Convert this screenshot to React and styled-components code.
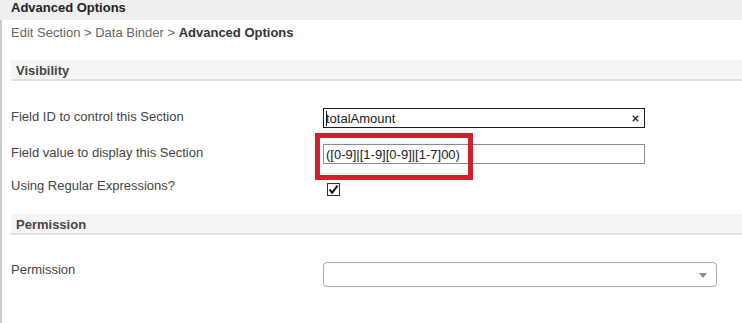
import React from "react";
import styled, { createGlobalStyle } from "styled-components";

const Global = createGlobalStyle`
  html, body { margin: 0; padding: 0; background: #fff; }
  body { font-family: "Liberation Sans", Arial, sans-serif; font-size: 13px; color: #333; }
  * { box-sizing: border-box; }
`;

const TitleBar = styled.div`
  height: 20px;
  background: #efefef;
  padding-left: 11px;
  font-weight: bold;
  line-height: 16px;
  color: #222;
`;

const Body = styled.div`
  border-left: 2px solid #c9c9c9;
  padding-left: 9px;
  min-height: 303px;
  display: flex;
  flex-direction: column;
`;

const Breadcrumb = styled.div`
  margin-top: 5px;
  line-height: 16px;
  color: #666;
  b { color: #333; }
`;

const SectionHeader = styled.div`
  margin-top: ${p => p.$top}px;
  height: 21px;
  background: #f5f5f5;
  border-bottom: 2px solid #e0e0e0;
  padding: 3px 0 0 5px;
  line-height: 16px;
  font-weight: bold;
  color: #444;
`;

const Row = styled.div`
  display: flex;
  align-items: flex-start;
  margin-top: ${p => p.$top}px;
  min-height: ${p => p.$h || 20}px;
`;

const Label = styled.div`
  width: 312px;
  flex: none;
  line-height: 16px;
  padding-top: ${p => p.$pt || 0}px;
  color: #444;
`;

const Cell = styled.div`
  position: relative;
  display: flex;
  align-items: center;
`;

const TextInput = styled.input`
  width: 322px;
  height: 20px;
  border: 1px solid ${p => p.$dark ? "#1a1a1a" : "#8a8a8a"};
  padding: 0 0 0 2px;
  margin: 0;
  font-family: "Liberation Sans", Arial, sans-serif;
  font-size: 13px;
  color: #222;
  background: #fff;
  outline: none;
`;

const Caret = styled.span`
  position: absolute;
  left: 3px;
  top: 3px;
  width: 1px;
  height: 15px;
  background: #111;
`;

const Clear = styled.span`
  position: absolute;
  right: 6px;
  top: 7px;
  width: 7px;
  height: 7px;
  display: flex;
`;

const Annotation = styled.div`
  position: absolute;
  left: -8px;
  top: -11px;
  width: 158px;
  height: 47px;
  border: 5px solid #d31f2d;
  pointer-events: none;
`;

const Check = styled.span`
  margin: 5px 0 0 4px;
  width: 13px;
  height: 13px;
  border: 1px solid #333;
  background: #fff;
  display: flex;
  align-items: center;
  justify-content: center;
`;

const Select = styled.div`
  width: 394px;
  height: 25px;
  border: 1px solid #aaa;
  border-radius: 4px;
  background: #fff;
  display: flex;
  align-items: center;
  justify-content: flex-end;
  padding-right: 9px;
`;

const Arrow = styled.span`
  width: 0;
  height: 0;
  border-left: 4px solid transparent;
  border-right: 4px solid transparent;
  border-top: 5px solid #888;
  margin-top: 1px;
`;

export default function App() {
  return (
    <>
      <Global />
      <TitleBar>Advanced Options</TitleBar>
      <Body>
        <Breadcrumb>Edit Section &gt; Data Binder &gt; <b>Advanced Options</b></Breadcrumb>
        <SectionHeader $top={19}>Visibility</SectionHeader>
        <Row $top={27}>
          <Label $pt={1}>Field ID to control this Section</Label>
          <Cell>
            <TextInput $dark readOnly value="totalAmount" />
            <Caret />
            <Clear>
              <svg width="7" height="7" viewBox="0 0 7 7">
                <path d="M0.8 0.8 L6.2 6.2 M6.2 0.8 L0.8 6.2" stroke="#333" strokeWidth="1.5" />
              </svg>
            </Clear>
          </Cell>
        </Row>
        <Row $top={16}>
          <Label $pt={1}>Field value to display this Section</Label>
          <Cell>
            <TextInput readOnly value="([0-9]|[1-9][0-9]|[1-7]00)" />
            <Annotation />
          </Cell>
        </Row>
        <Row $top={14} $h={20}>
          <Label>Using Regular Expressions?</Label>
          <Check>
            <svg width="11" height="11" viewBox="0 0 11 11">
              <path d="M1.5 5.5 L4.2 8.6 L9.6 1.6" fill="none" stroke="#111" strokeWidth="2" />
            </svg>
          </Check>
        </Row>
        <SectionHeader $top={16}>Permission</SectionHeader>
        <Row $top={27}>
          <Label>Permission</Label>
          <Select><Arrow /></Select>
        </Row>
      </Body>
    </>
  );
}
